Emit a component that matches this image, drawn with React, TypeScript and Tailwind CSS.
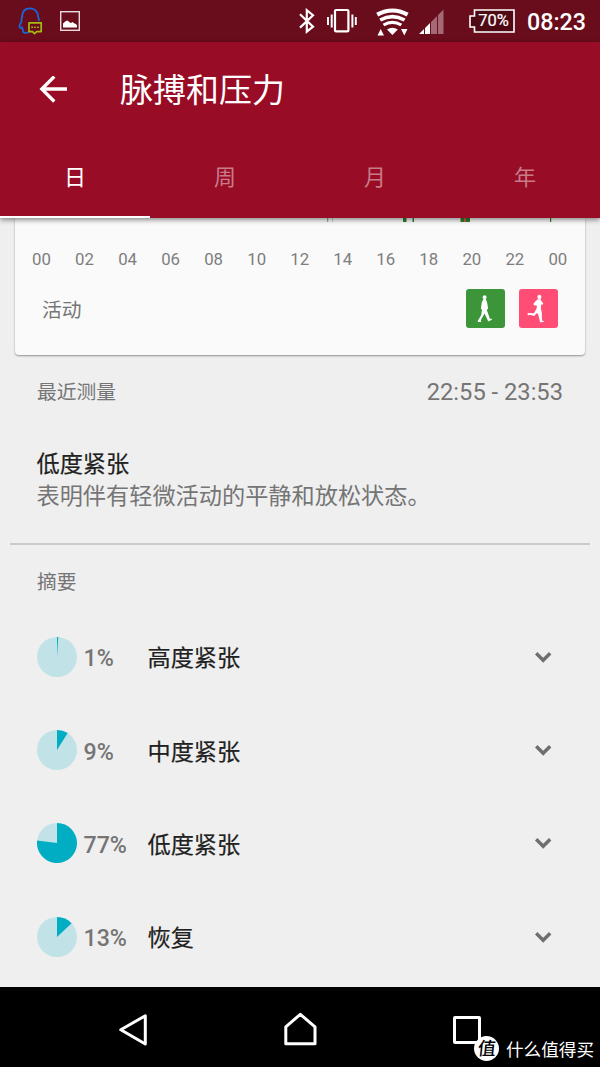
import React from "react";

const hours = ["00", "02", "04", "06", "08", "10", "12", "14", "16", "18", "20", "22", "00"];

const summary = [
  { percent: 1, label: "高度紧张" },
  { percent: 9, label: "中度紧张" },
  { percent: 77, label: "低度紧张" },
  { percent: 13, label: "恢复" },
];

const tabs = ["日", "周", "月", "年"];

function StatusBar() {
  return (
    <div className="flex h-[42px] shrink-0 items-start bg-[#690c1b] text-white">
      <svg className="ml-[17px] mt-[6px] h-[30px] w-[26px]" viewBox="17 6 26 30" fill="none">
        <path d="M29 31.500c-2 2.300-6 1.800-6-.5 0-1.500-.5-2-1-3.500-1 .8-2.500.8-2.500-1 0-2.500 1.500-3.500 2-5-.5-1.800.3-3 .6-4.500C22.300 11.500 25 8.400 30 8.400s8.200 3.600 8.200 8.600c.6 1 .8 2 .6 4" stroke="#1768dc" strokeWidth="1.800" />
        <path d="M29 22.800h12.200v8.800h-4.500l-2.200 2-2-2H29z" fill="#690c1b" stroke="#a4bd10" strokeWidth="1.700" strokeLinejoin="round" />
        <path d="M31.300 27.300h1.700m1.200 0h1.700m1.200 0h1.700" stroke="#a4bd10" strokeWidth="1.500" />
      </svg>
      <svg className="ml-[17px] mt-[11px] h-[20px] w-[20px]" viewBox="0 0 20 20" fill="none">
        <rect x=".7" y=".7" width="18.600" height="18.600" stroke="#e9dadd" strokeWidth="1.400" />
        <path d="M3 16.500v-4l2.500-2.200 2-.8 2 1.800 1.500.8 1.500-1.100 2 1.500 1.500.5 1 1.500v2z" fill="#fff" />
      </svg>
      <svg className="ml-[218px] mt-[8px] h-[26px] w-[18px]" viewBox="298 8 18 26" fill="none" stroke="#fff" strokeWidth="2.200">
        <path d="m300 14.200 13 12.400-6.200 5V10.200l6.200 5-13 12.400" />
      </svg>
      <svg className="ml-[10px] mt-[8px] h-[26px] w-[32px]" viewBox="326 8 32 26" fill="none" stroke="#fff">
        <rect x="335" y="10" width="13.400" height="21.400" rx="1" strokeWidth="2.200" />
        <path d="M331.700 14.500v13M352.400 14.500v13" strokeWidth="2" />
        <path d="M328 17v8M355.800 17v8" strokeWidth="1.900" />
      </svg>
      <svg className="ml-[17px] mt-[8px] h-[29px] w-[35px]" viewBox="375 8 35 29" fill="none" stroke="#fff">
        <path d="M377.200 14.600q15.200-8.200 30.400 0" strokeWidth="4.200" />
        <path d="M380.200 20q12.200-6.800 24.400 0" strokeWidth="3.600" />
        <path d="M383.500 25q8.900-5.300 17.800 0" strokeWidth="3.200" />
        <path d="M387 29.500q5.400-3.500 10.800 0l-5.400 5.500z" fill="#fff" stroke="none" />
        <path d="m377.500 35.500 3.200-6.500 3.300 6.500zm23.500-6.500h6.500l-3.200 6.500z" fill="#fff" stroke="none" />
      </svg>
      <svg className="ml-[9px] mt-[9px] h-[25px] w-[26px]" viewBox="419 9 26 25">
        <path d="m419 34 5-5v5zm6 0v-6l5-5v11z" fill="#fff" />
        <path d="m431 34V22l6-6v18zm7 0V15l5.500-5.500V34z" fill="#a56875" />
      </svg>
      <div className="relative ml-[24px] mt-[9px] h-[24px] w-[46px]">
        <svg className="h-[24px] w-[46px]" viewBox="0 0 46 24">
          <path d="M5.500 1H45v22H5.500v-5H1V7h4.500z" fill="#4f0914" stroke="#fff" strokeWidth="1.600" />
        </svg>
        <span className="absolute inset-y-0 left-[3px] right-0 text-center text-[16.500px] leading-[24px] [-webkit-text-stroke:0.200px]">70%</span>
      </div>
      <span className="ml-[12px] whitespace-nowrap text-[23.300px] font-medium leading-[44px]">08:23</span>
    </div>
  );
}

function Header() {
  return (
    <header className="relative z-10 flex h-[176px] shrink-0 flex-col bg-[#980c25] text-white shadow-[0_2px_5px_rgba(0,0,0,0.450)]">
      <div className="flex h-[95px] items-center">
        <svg className="ml-[39px] h-[28px] w-[30px]" viewBox="39 75.500 30 28" fill="none" stroke="#fff" strokeWidth="3.300">
          <path d="M67 88.500H42M54.300 76 41.800 88.500 54.300 101" />
        </svg>
        <h1 className="ml-[51px] pt-[2px] text-[33px] leading-[40px]">脉搏和压力</h1>
      </div>
      <nav className="grid grow grid-cols-4">
        {tabs.map((t, i) => (
          <div
            key={t}
            className={
              i === 0
                ? "h-[81px] border-b-[2px] border-white text-center text-[22px] leading-[81px]"
                : "h-[81px] text-center text-[22px] leading-[81px] text-[#c87b89]"
            }
          >
            {t}
          </div>
        ))}
      </nav>
    </header>
  );
}

function ActivityCard() {
  return (
    <section className="mx-[15px] flex h-[137px] shrink-0 flex-col rounded-b-[4px] bg-[#fafafa] shadow-[0_1px_2px_rgba(0,0,0,0.400)]">
      <svg className="h-[4px] w-full" viewBox="15 218 570 4">
        <path d="M327 218h1.200v4H327z" fill="#8fb58f" />
        <path d="M403 218h3.500v4H403zM412.500 218h1.500v4h-1.500zM460.500 218h9.500v4h-9.500zM550 218h1.200v4H550z" fill="#2d812d" />
        <path d="M332 218h1v4h-1z" fill="#c5d8c5" />
        <path d="M464 218h2v4h-2z" fill="#c86052" />
      </svg>
      <div className="ml-[5px] mr-[5.500px] mt-[25px] flex justify-between text-center text-[16.800px] leading-[24px] text-[#7e7e7e]">
        {hours.map((h, i) => (
          <span key={i} className="w-[43px]">{h}</span>
        ))}
      </div>
      <div className="ml-[27px] mr-[27px] mt-[18px] flex h-[39px] items-start">
        <span className="grow text-[19.800px] leading-[43px] text-[#757575]">活动</span>
        <span className="flex h-[39px] w-[39px] items-center justify-center rounded-[3px] bg-[#3c9639]">
          <svg className="h-[39px] w-[39px]" viewBox="466 289 39 39" fill="#fff">
            <circle cx="484.600" cy="297.200" r="1.900" />
            <path d="M483.400 299h2.400l1.300 3.500 1 6-1.300 1.500 1.600 4.500 1.600 4.500 1.700-.6.200 1.300-3.600 1.800-3.700-8-3.200 5.500-.7 2 .8.900h-3.700l-.1-1 3.500-6 .8-5.500-1.100-.7.900-6.500z" />
          </svg>
        </span>
        <span className="ml-[14px] flex h-[39px] w-[39px] items-center justify-center rounded-[3px] bg-[#ff4d76]">
          <svg className="h-[39px] w-[39px]" viewBox="519 289 39 39" fill="#fff">
            <ellipse cx="539.400" cy="297" rx="2" ry="2.200" />
            <path d="M537.800 299.200h3l.6 2 1.900 2-.8 1.600-1.400-.3-.1 4.500.8 3.500.2 8 1.700.4-.1 1.100-3.500.3-2-8.200-1.700-.9-2 2.700-5-1.100-1.200.8-.9-1.900 1-.8 5.600.4 2.500-4.300.6-3.200-2.900-.6-.8-1.300 2.200-2.700z" />
          </svg>
        </span>
      </div>
    </section>
  );
}

function Pie({ percent }: { percent: number }) {
  const a = (percent / 100) * Math.PI * 2;
  const x = 20 + 20 * Math.sin(a);
  const y = 20 - 20 * Math.cos(a);
  return (
    <svg className="mb-[2px] h-[40px] w-[40px] shrink-0" viewBox="0 0 40 40">
      <circle cx="20" cy="20" r="20" fill="#c1e3e8" />
      <path d={`M20 20V0A20 20 0 ${percent > 50 ? 1 : 0} 1 ${x} ${y}Z`} fill="#00adc3" />
    </svg>
  );
}

export default function App() {
  return (
    <div className="flex h-[1067px] w-[600px] flex-col overflow-hidden bg-[#efefef] font-['Roboto','Noto_Sans_CJK_SC',sans-serif]">
      <StatusBar />
      <Header />
      <ActivityCard />
      <main className="flex grow flex-col">
        <div className="ml-[37px] mr-[37px] mt-[22px] flex h-[30px] items-center justify-between text-[#757575]">
          <span className="pt-[1px] text-[19.800px]">最近测量</span>
          <span className="pt-[2px] text-[23.700px]">22:55 - 23:53</span>
        </div>
        <h2 className="ml-[36.500px] mt-[41px] text-[23.200px] leading-[32px] text-[#212121] [-webkit-text-stroke:0.200px]">低度紧张</h2>
        <p className="ml-[36.500px] text-[23.200px] leading-[32px] text-[#757575]">表明伴有轻微活动的平静和放松状态。</p>
        <div className="mx-[10px] mt-[31px] h-[2px] bg-[#cbcbcb]" />
        <h3 className="ml-[37px] mt-[23px] text-[19.800px] leading-[30px] text-[#757575]">摘要</h3>
        <ul className="mt-[13px]">
          {summary.map((s) => (
            <li key={s.label} className="flex h-[93.400px] items-center pl-[36.500px] pr-[48px]">
              <Pie percent={s.percent} />
              <span className="ml-[7px] w-[64px] pt-[2px] text-[23.200px] font-medium text-[#757575]">{s.percent}%</span>
              <span className="grow pt-[2px] text-[23.200px] text-[#212121] [-webkit-text-stroke:0.200px]">{s.label}</span>
              <svg className="mb-[2px] h-[14px] w-[18px]" viewBox="0 0 18 14" fill="none">
                <path d="m2.200 3.300 7 7 7-7" stroke="#6f6f6f" strokeWidth="3.400" />
              </svg>
            </li>
          ))}
        </ul>
      </main>
      <footer className="flex h-[80px] shrink-0 items-start bg-black text-white">
        <svg className="ml-[118px] mt-[26px] h-[34px] w-[30px]" viewBox="118 1013 30 34" fill="none" stroke="#fff" strokeWidth="3" strokeLinejoin="round">
          <path d="M145.300 1015.800v28.200l-24.500-14.200z" />
        </svg>
        <svg className="ml-[135px] mt-[24px] h-[36px] w-[36px]" viewBox="283 1011 36 36" fill="none" stroke="#fff" strokeWidth="3" strokeLinejoin="round">
          <path d="M285.800 1043.800v-17l14.500-12.500 14.700 12.500v17z" />
        </svg>
        <div className="relative ml-[134px] mt-[29px] h-[28px] w-[28px] rounded-[2px] border-[3px] border-white">
          <span className="absolute left-[18px] top-[17px] flex h-[25px] w-[25px] items-center justify-center rounded-full bg-white text-[18px] font-medium leading-[24px] text-black">
            <span className="-skew-x-6">值</span>
          </span>
        </div>
        <span className="ml-[25px] mt-[50px] whitespace-nowrap text-[17.600px] leading-[26px]">什么值得买</span>
      </footer>
    </div>
  );
}
